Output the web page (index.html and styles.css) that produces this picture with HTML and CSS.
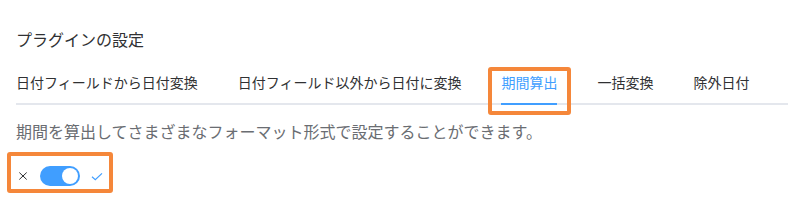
FILE: index.html
```html
<!doctype html>
<html lang="ja">
<head>
    <meta charset="utf-8">
    <title>プラグインの設定</title>
    <link rel="stylesheet" href="styles.css">
</head>
<body>
    <div class="settings">
        <h2 class="settings-title">プラグインの設定</h2>

        <div class="tabs">
            <div class="tab">日付フィールドから日付変換</div>
            <div class="tab">日付フィールド以外から日付に変換</div>
            <div class="tab is-active">期間算出</div>
            <div class="tab">一括変換</div>
            <div class="tab">除外日付</div>
        </div>

        <p class="desc">期間を算出してさまざまなフォーマット形式で設定することができます。</p>

        <div class="switch">
            <span class="switch-label">
                <svg width="14" height="14" viewBox="0 0 14 14">
                    <path d="M3.3 3.5 L10.7 10.5 M10.7 3.5 L3.3 10.5" stroke="#303133" stroke-width="1" fill="none"/>
                </svg>
            </span>
            <span class="switch-core"><span class="switch-knob"></span></span>
            <span class="switch-label">
                <svg width="14" height="14" viewBox="0 0 14 14">
                    <path d="M2 7.8 L5.3 10.6 L12 4.4" stroke="#409eff" stroke-width="1.2" fill="none"/>
                </svg>
            </span>
        </div>
    </div>

    <div class="mark mark-tab"></div>
    <div class="mark mark-switch"></div>
</body>
</html>
```

FILE: styles.css
```css
body {
    margin: 0;
    background-color: #ffffff;
    font-family: "Noto Sans CJK JP", "Noto Sans", sans-serif;
    color: #303133;
}

.settings {
    padding: 27px 0 0 16px;
}

.settings-title {
    margin: 0;
    font-size: 16px;
    font-weight: normal;
    line-height: 24px;
}

.tabs {
    display: flex;
    margin-top: 12px;
    border-bottom: 2px solid #e4e7ed;
}

.tab {
    padding: 0 20px;
    height: 40px;
    line-height: 38px;
    font-size: 14px;
    margin-bottom: -2px;
    border-bottom: 2px solid transparent;
}

.tab:first-child {
    padding-left: 0;
}

.tab.is-active {
    color: #409eff;
    border-bottom-color: #409eff;
    padding: 0;
    margin: 0 20px -2px;
}

.desc {
    margin: 14px 0 0;
    font-size: 16px;
    line-height: 24px;
    color: #6a6d72;
}

.switch {
    display: flex;
    align-items: center;
    gap: 10px;
    margin-top: 23px;
    height: 20px;
}

.switch-label {
    display: flex;
    width: 14px;
    height: 14px;
}

.switch-core {
    position: relative;
    width: 40px;
    height: 20px;
    border-radius: 10px;
    background-color: #409eff;
}

.switch-knob {
    position: absolute;
    top: 2px;
    left: 22px;
    width: 16px;
    height: 16px;
    border-radius: 50%;
    background-color: #ffffff;
}

.mark {
    position: absolute;
    border: 4px solid #f5873a;
    border-radius: 3px;
}

.mark-tab {
    left: 488px;
    top: 67px;
    width: 75px;
    height: 40px;
}

.mark-switch {
    left: 7px;
    top: 152px;
    width: 98px;
    height: 33px;
}
```
